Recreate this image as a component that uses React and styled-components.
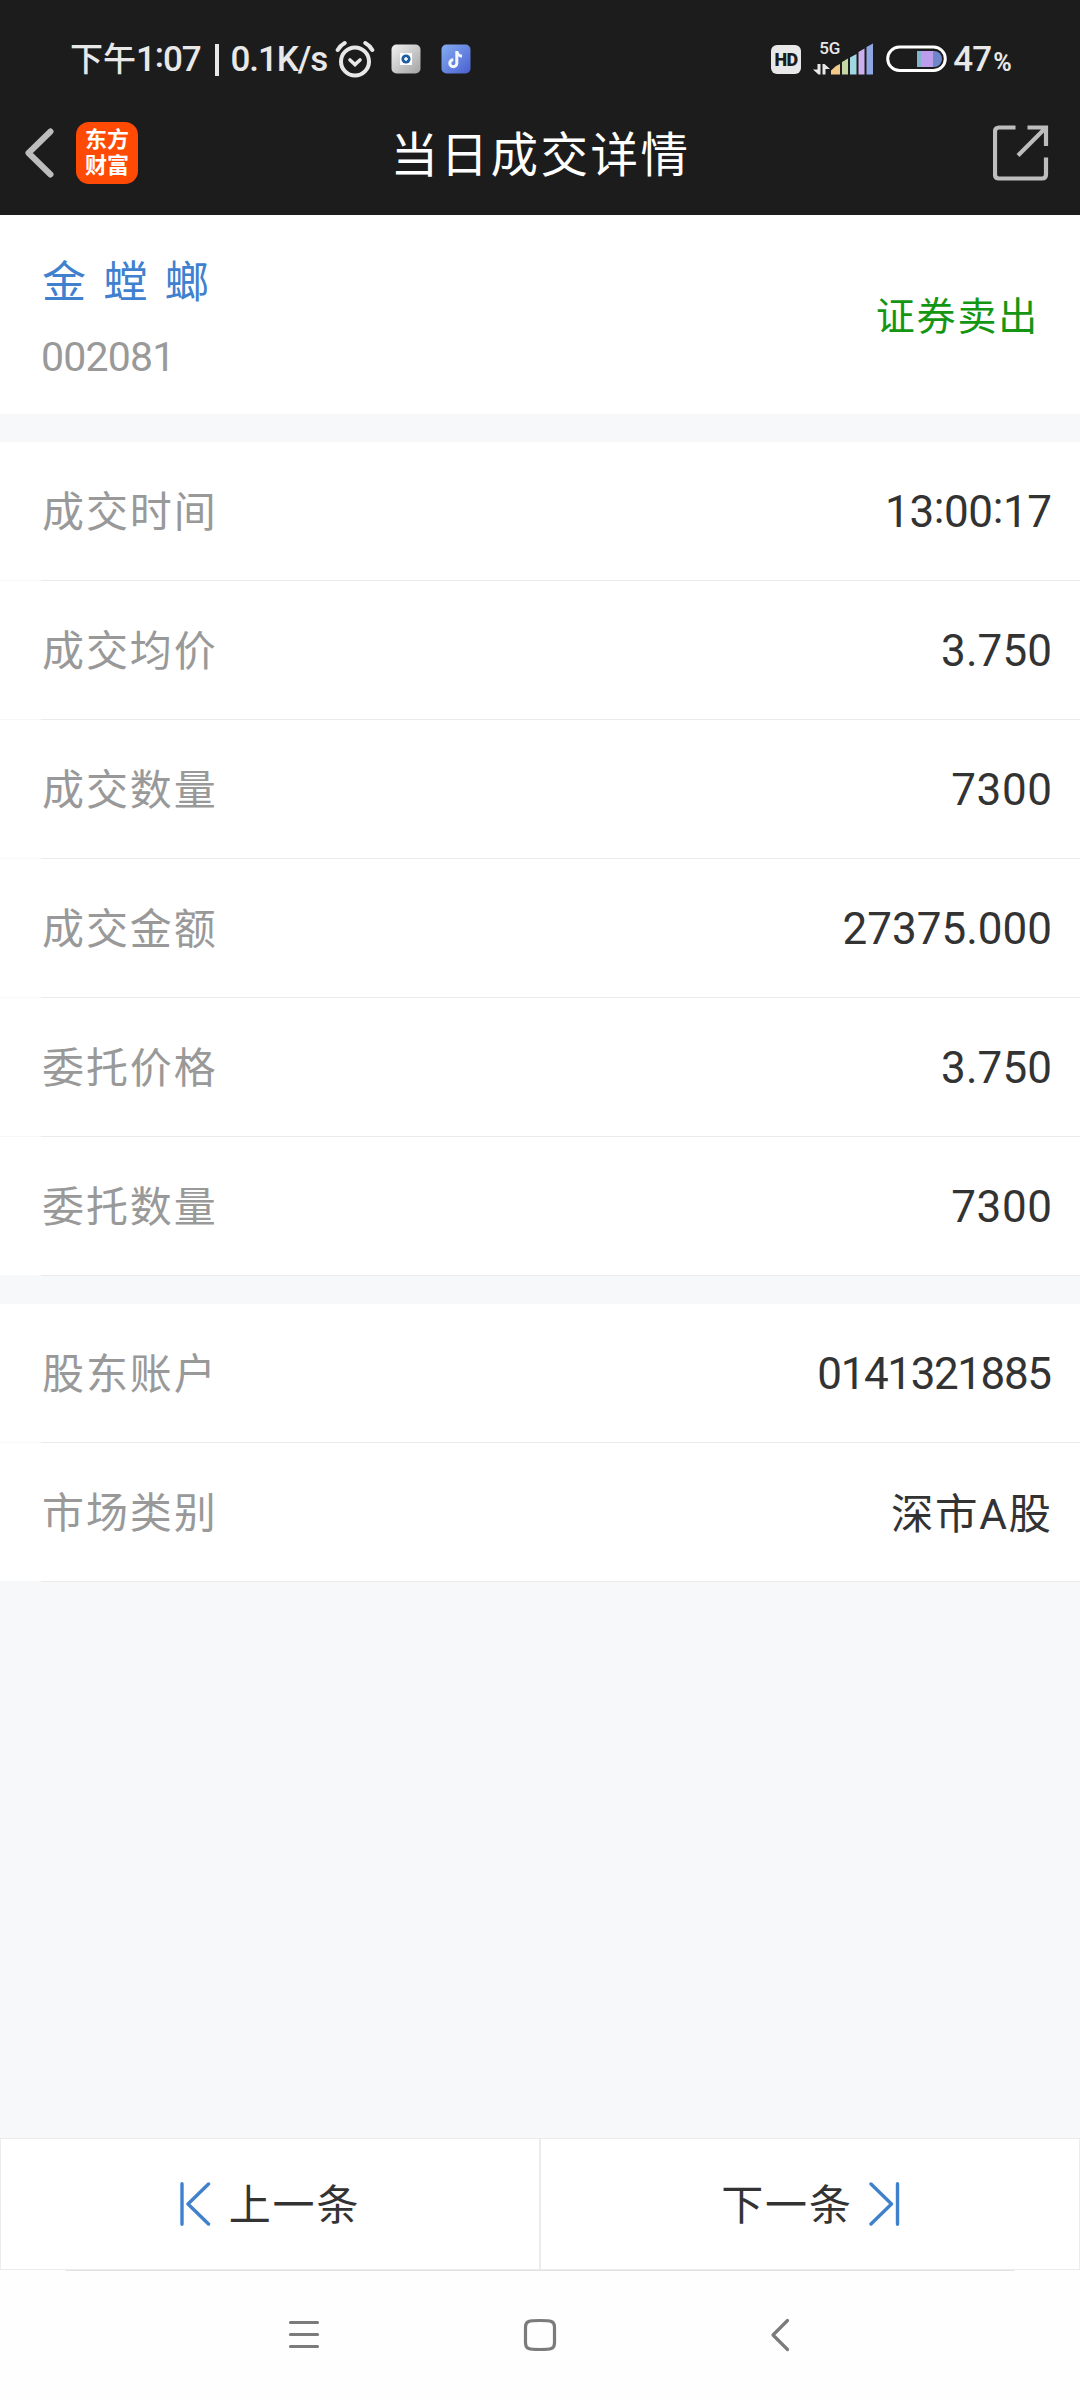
import React from 'react'
import styled, { createGlobalStyle } from 'styled-components'


const tradeRows = [
    { label: '成交时间', value: '13:00:17', spacing: -0.4 },
    { label: '成交均价', value: '3.750', spacing: 0.1 },
    { label: '成交数量', value: '7300', spacing: 0.6 },
    { label: '成交金额', value: '27375.000', spacing: 0 },
    { label: '委托价格', value: '3.750', spacing: 0.1 },
    { label: '委托数量', value: '7300', spacing: 0.6 },
]

const accountRows = [
    { label: '股东账户', value: '0141321885', spacing: -1.4 },
    { label: '市场类别', value: '深市A股', spacing: 1.6, cn: true },
]


// the colon sits at mid height between digits
const withColons = (text) => text.split(':').map((part, i) => (
    <React.Fragment key={i}>
        {i > 0 && <Colon>:</Colon>}
        {part}
    </React.Fragment>
))

const AlarmIcon = () => (
    <svg width='40' height='38' viewBox='0 0 40 38' fill='none' stroke='#e8e8e8' strokeWidth='4' strokeLinecap='round'>
        <circle cx='20' cy='21.500' r='14' />
        <path d='M15 20l5 4.500 5-4.500' strokeWidth='3.600' />
        <path d='M2.700 10q2.500-4.500 7-7M37.300 10q-2.500-4.500-7-7' />
    </svg>
)

const CameraIcon = () => (
    <svg width='30' height='30' viewBox='0 0 30 30'>
        <defs>
            <linearGradient id='camera' x1='0' y1='0' x2='1' y2='1'>
                <stop offset='0' stopColor='#f2f2f2' />
                <stop offset='1' stopColor='#a2a2a2' />
            </linearGradient>
        </defs>
        <rect width='29' height='29' x='0.5' y='0.5' rx='5' fill='url(#camera)' />
        <rect x='9' y='9' width='12' height='12' fill='#fff' />
        <circle cx='15' cy='15' r='4.600' fill='#1c5f9c' />
        <path d='M15 13v4M13 15h4' stroke='#fff' strokeWidth='1.500' />
    </svg>
)

const MusicIcon = () => (
    <svg width='30' height='30' viewBox='0 0 30 30'>
        <defs>
            <linearGradient id='music' x1='0' y1='0' x2='1' y2='1'>
                <stop offset='0' stopColor='#84aef2' />
                <stop offset='1' stopColor='#4a5fcf' />
            </linearGradient>
        </defs>
        <rect width='29' height='29' x='0.5' y='0.5' rx='5' fill='url(#music)' />
        <path d='M15.800 7v12.200a3.500 3.500 0 1 1-3.500-3.500M15.800 7.500q1 4.200 5.200 4.700' fill='none' stroke='#f4f6fd' strokeWidth='3' />
    </svg>
)

const SignalIcon = () => (
    <svg width='62' height='32' viewBox='0 0 62 32'>
        <g fill='#e8e8e8'>
            <path d='M4.500 21h3v10.500h-2L0 26.500h4.500z' />
            <path d='M9.500 31.500h3v-5.500H17L11.500 21h-2z' />
        </g>
        <path d='M18 31.500v-4l5-4.500 4-2v10.500z' fill='#f5c98c' />
        <path d='M29 31.500V19l6-3.500v16z' fill='#c3d6a3' />
        <path d='M37 31.500V14.500l6.500-3.500v20.500z' fill='#a0d8e2' />
        <path d='M45.500 31.500V9l6-3.500v26z' fill='#cdb0ee' />
        <path d='M53.500 31.500V4l6.500-3.500v31z' fill='#8fa8e2' />
    </svg>
)

const BatteryIcon = () => (
    <svg width='62' height='28' viewBox='0 0 62 28'>
        <rect x='1.700' y='2' width='57.600' height='23.500' rx='11.750' fill='none' stroke='#fff' strokeWidth='3' />
        <path d='M31 6h4v16h-4z' fill='#82b4cb' />
        <path d='M35 6h12v16H35z' fill='#bb9dec' />
        <path d='M47 6h1a8 8 0 0 1 0 16h-1z' fill='#6e87cb' />
    </svg>
)

const BackIcon = () => (
    <svg width='30' height='50' viewBox='0 0 30 50' fill='none' stroke='#bdbdbd' strokeWidth='6' strokeLinecap='round' strokeLinejoin='round'>
        <path d='M26.500 3.500L4.500 25l22 21.500' />
    </svg>
)

const ShareIcon = () => (
    <svg width='56' height='56' viewBox='0 0 56 56' fill='none' stroke='#bdbdbd' strokeWidth='4.200'>
        <path d='M22.500 2.500H6q-4 0-4 4v43q0 4 4 4h43q4 0 4-4V32.500' />
        <path d='M34.500 2.500H53V21M52 3.500L25 30.500' />
    </svg>
)

const StepIcon = ({ next }) => (
    <svg width='31' height='44' viewBox='0 0 31 44' fill='none' stroke='#4080cc' strokeWidth='3.400' strokeLinecap='round' strokeLinejoin='round'>
        {next ?
            <path d='M28.500 1.800v40.500M2 2l20.500 20L2 42' />
            :
            <path d='M2 1.800v40.500M28.500 2L8 22l20.500 20' />
        }
    </svg>
)


const App = () => {

    const renderRows = (rows) => rows.map(row => (
        <RowWrap key={row.label}>
            <Row>
                <Label>{row.label}</Label>
                <Value $spacing={row.spacing} $cn={row.cn}>{withColons(row.value)}</Value>
            </Row>
            <Divider />
        </RowWrap>
    ))

    return (
        <Page>
            <GlobalStyle />
            <Header>
                <StatusBar>
                    <StatusLeft>
                        <Clock>
                            <ClockCn>下午</ClockCn>
                            {withColons('1:07')}
                            <Pipe />
                            0.1K/s
                        </Clock>
                        <AlarmIcon />
                        <NoticeIcons>
                            <CameraIcon />
                            <MusicIcon />
                        </NoticeIcons>
                    </StatusLeft>
                    <StatusRight>
                        <HdBadge>HD</HdBadge>
                        <Signal>
                            <SignalIcon />
                            <NetType>5G</NetType>
                        </Signal>
                        <BatteryIcon />
                        <Percent>47<small>%</small></Percent>
                    </StatusRight>
                </StatusBar>
                <TitleBar>
                    <TitleSide>
                        <BackIcon />
                        <Logo>
                            <span>东方</span>
                            <span>财富</span>
                        </Logo>
                    </TitleSide>
                    <Title>当日成交详情</Title>
                    <TitleSide $end>
                        <ShareIcon />
                    </TitleSide>
                </TitleBar>
            </Header>

            <Stock>
                <div>
                    <StockName>金 螳 螂</StockName>
                    <StockCode>002081</StockCode>
                </div>
                <Side>证券卖出</Side>
            </Stock>

            <Section>{renderRows(tradeRows)}</Section>
            <Section>{renderRows(accountRows)}</Section>

            <Pager>
                <PagerButton>
                    <StepIcon />
                    <span>上一条</span>
                </PagerButton>
                <PagerButton $next>
                    <span>下一条</span>
                    <StepIcon next />
                </PagerButton>
            </Pager>
            <NavBar>
                <svg width='32' height='32' viewBox='0 0 32 32' stroke='#7b7b7b' strokeWidth='3.200' strokeLinecap='round'>
                    <path d='M2.500 4.500h27M2.500 16.500h27M2.500 28.500h27' />
                </svg>
                <svg width='34' height='34' viewBox='0 0 34 34' fill='none' stroke='#7b7b7b' strokeWidth='3.200'>
                    <path d='M17 2.500C28 2.500 31.500 3 31.500 9v16c0 6-3.500 6.500-14.500 6.500S2.500 31 2.500 25V9C2.500 3 6 2.500 17 2.500z' />
                </svg>
                <BackKey width='20' height='34' viewBox='0 0 20 34' fill='none' stroke='#7b7b7b' strokeWidth='3.200' strokeLinecap='round' strokeLinejoin='round'>
                    <path d='M17.500 2.500L3 17l14.500 14.500' />
                </BackKey>
            </NavBar>
        </Page>
    )
}

export default App


const GlobalStyle = createGlobalStyle`
    * {
        box-sizing: border-box;
    }

    body {
        margin: 0;
        background: #f6f8fa;
    }

    svg {
        display: block;
        flex: none;
    }
`

const Page = styled.div`
    display: flex;
    flex-direction: column;
    width: 1080px;
    height: 2400px;
    background: #f6f8fa;
    color: #333;
    font-family: Roboto, 'Noto Sans CJK SC', sans-serif;
    white-space: nowrap;
`

const Header = styled.header`
    height: 215px;
    background: #1c1c1c;
    color: #e8e8e8;
`

const StatusBar = styled.div`
    display: flex;
    justify-content: space-between;
    align-items: center;
    height: 90px;
    padding: 28px 69px 0 70px;
`

const StatusLeft = styled.div`
    display: flex;
    align-items: center;
`

const Clock = styled.div`
    display: flex;
    align-items: center;
    width: 265px;
    padding-top: 2px;
    font-size: 35px;
    font-weight: 500;
    line-height: 60px;
    letter-spacing: -1.100px;
`

const ClockCn = styled.span`
    font-size: 33px;
    letter-spacing: 0;
`

const Pipe = styled.span`
    width: 4px;
    height: 32px;
    margin: 0 12px 0 14px;
    background: #e8e8e8;
`

const Colon = styled.span`
    position: relative;
    top: -4px;
`

const NoticeIcons = styled.div`
    display: flex;
    gap: 20px;
    margin-left: 16px;
`

const StatusRight = styled.div`
    display: flex;
    align-items: center;
`

const HdBadge = styled.span`
    width: 30px;
    height: 29px;
    margin-right: 12px;
    border-radius: 6px;
    background: #e8e8e8;
    color: #1c1c1c;
    font-size: 18px;
    font-weight: 900;
    line-height: 30px;
    letter-spacing: -0.5px;
    text-align: center;
`

const Signal = styled.div`
    position: relative;
    margin-right: 11px;
`

const NetType = styled.span`
    position: absolute;
    top: -3px;
    left: 6px;
    font-size: 17px;
    font-weight: 500;
    line-height: 17px;
`

const Percent = styled.span`
    margin-left: 5px;
    padding-top: 1px;
    font-size: 35px;
    font-weight: 500;
    letter-spacing: -0.8px;

    small {
        margin-left: 2px;
        font-size: 25px;
        font-weight: 700;
    }
`

const TitleBar = styled.div`
    display: flex;
    justify-content: space-between;
    align-items: center;
    height: 125px;
    padding: 0 31px 0 24px;
`

const TitleSide = styled.div`
    display: flex;
    align-items: center;
    justify-content: ${props => props.$end ? 'flex-end' : 'flex-start'};
    gap: 22px;
    width: 160px;
`

const Logo = styled.div`
    display: flex;
    flex-direction: column;
    align-items: center;
    justify-content: center;
    width: 62px;
    height: 62px;
    border-radius: 13px;
    background: #ff4a05;
    color: #fff;
    font-size: 22px;
    font-weight: 700;
    line-height: 26px;
`

const Title = styled.h1`
    margin: 0;
    padding: 0 0 2px 8px;
    color: #fff;
    font-size: 47.500px;
    font-weight: 400;
    letter-spacing: 2.500px;
`

const Stock = styled.section`
    display: flex;
    justify-content: space-between;
    align-items: center;
    height: 199px;
    padding: 0 41px 0 41px;
    background: #fff;
`

const StockName = styled.div`
    margin: 11px 0 0 1px;
    color: #3f80cf;
    font-size: 44px;
    line-height: 70px;
    word-spacing: 6.500px;
`

const StockCode = styled.div`
    margin-top: 4px;
    color: #999;
    font-size: 41px;
    line-height: 70px;
    letter-spacing: -0.800px;
`

const Side = styled.div`
    padding-bottom: 4px;
    color: #159613;
    font-size: 39px;
    letter-spacing: 1.800px;
`

const Section = styled.section`
    margin-top: 28px;
`

const RowWrap = styled.div`
    height: 139px;
`

const Row = styled.div`
    display: flex;
    justify-content: space-between;
    align-items: center;
    height: 138px;
    padding: 0 28px 0 42px;
    background: #fff;
`

const Divider = styled.div`
    height: 1px;
    margin-left: 41px;
    background: #ebebeb;
`

const Label = styled.span`
    padding-bottom: 5px;
    color: #999;
    font-size: 42px;
    letter-spacing: 1.900px;
`

const Value = styled.span`
    margin-right: ${props => -props.$spacing}px;
    padding: ${props => props.$cn ? '0 1px 4px 0' : '1px 0 0'};
    color: #333;
    font-size: ${props => props.$cn ? '42.500px' : '44px'};
    letter-spacing: ${props => props.$spacing}px;
`

const Pager = styled.div`
    display: flex;
    margin-top: auto;
`

const PagerButton = styled.button`
    display: flex;
    align-items: center;
    justify-content: center;
    gap: ${props => props.$next ? '16px' : '18px'};
    width: 540px;
    height: 132px;
    padding: ${props => props.$next ? '0 0 0 1px' : '0'};
    border: 1px solid #ebebeb;
    background: #fff;
    color: #333;
    font-family: inherit;
    font-size: 42px;
    letter-spacing: 1.900px;

    span {
        padding-bottom: 5px;
    }
`

const NavBar = styled.nav`
    display: flex;
    gap: 203px;
    height: 130px;
    padding: 48px 288px 0;
    background: linear-gradient(#e3e3e3, #e3e3e3) 66px 0 / 948px 1px no-repeat #fefefe;
`

const BackKey = styled.svg`
    margin-left: 10px;
`
